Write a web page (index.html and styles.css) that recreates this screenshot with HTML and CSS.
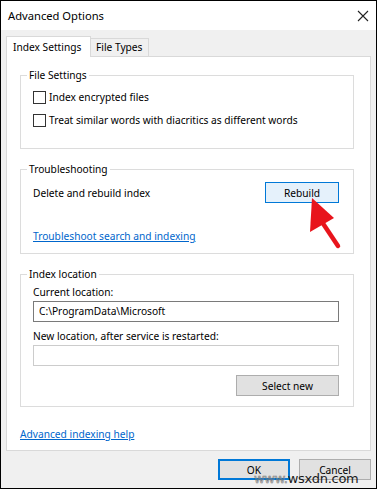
FILE: index.html
```html
<!DOCTYPE html>
<html lang="en">

<head>
    <meta charset="UTF-8">
    <meta name="viewport" content="width=device-width, initial-scale=1.0">
    <title>Advanced Options</title>
    <link rel="stylesheet" href="styles.css">
</head>

<body>
    <!-- 对话框窗口 -->
    <div class="window">
        <!-- 标题栏 -->
        <div class="titlebar">
            <span class="title">Advanced Options</span>
            <svg class="close" width="12" height="12" viewBox="0 0 12 12">
                <path d="M1 1 L11 11 M11 1 L1 11" stroke="#222" stroke-width="1.1" fill="none" />
            </svg>
        </div>

        <div class="content">
            <!-- 选项卡 -->
            <div class="tabs">
                <div class="tab active">Index Settings</div>
                <div class="tab">File Types</div>
            </div>

            <div class="panel">
                <fieldset class="group group-files">
                    <legend>File Settings</legend>
                    <label class="check"><span class="box"></span>Index encrypted files</label>
                    <label class="check"><span class="box"></span>Treat similar words with diacritics as different words</label>
                </fieldset>

                <fieldset class="group group-trouble">
                    <legend>Troubleshooting</legend>
                    <div class="row">
                        <span>Delete and rebuild index</span>
                        <button class="btn btn-focus">Rebuild</button>
                    </div>
                    <a href="#" class="link">Troubleshoot search and indexing</a>
                </fieldset>

                <fieldset class="group group-location">
                    <legend>Index location</legend>
                    <div class="field-label">Current location:</div>
                    <div class="input">C:\ProgramData\Microsoft</div>
                    <div class="field-label second">New location, after service is restarted:</div>
                    <div class="input disabled"></div>
                    <div class="row-end">
                        <button class="btn btn-select">Select new</button>
                    </div>
                </fieldset>

                <a href="#" class="link help">Advanced indexing help</a>
            </div>

            <!-- 底部按钮 -->
            <div class="actions">
                <button class="btn btn-default">OK</button>
                <button class="btn">Cancel</button>
            </div>
        </div>
    </div>

    <!-- 红色箭头 -->
    <svg class="arrow" width="377" height="489" viewBox="0 0 377 489">
        <path d="M322 222 L338 246" stroke="#e8141c" stroke-width="4.5" stroke-linecap="round" fill="none" />
        <polygon points="312,198 310,232 334,218" fill="#e8141c" />
    </svg>

    <!-- 水印 -->
    <div class="watermark"><span class="www">www.</span>wsxdn.com</div>
</body>

</html>
```

FILE: styles.css
```css
* {
    margin: 0;
    padding: 0;
    box-sizing: border-box;
}

body {
    position: relative;
    width: 377px;
    height: 489px;
    font-family: "Noto Sans", "Open Sans", sans-serif;
    font-size: 10.2px;
    line-height: 14px;
    color: #000;
}

.window {
    width: 377px;
    height: 489px;
    border: 1px solid #000;
    background: #f0f0f0;
}

.titlebar {
    height: 29px;
    background: #fff;
    display: flex;
    align-items: center;
    justify-content: space-between;
    padding: 0 7px 0 7px;
}

.titlebar .title {
    font-size: 11.2px;
}

.content {
    padding: 6px 5px 0 5px;
}

.tabs {
    display: flex;
    align-items: flex-end;
    height: 21px;
    margin-bottom: -1px;
}

.tab {
    height: 18px;
    margin-bottom: 1px;
    padding: 0 5px;
    border: 1px solid #d9d9d9;
    border-bottom: none;
    background: #f0f0f0;
    line-height: 17px;
    margin-left: -1px;
    white-space: nowrap;
}

.tab.active {
    height: 21px;
    margin-bottom: 0;
    margin-left: 0;
    width: 85px;
    padding: 0 6px;
    background: #fff;
    line-height: 20px;
    position: relative;
    z-index: 1;
}

.panel {
    height: 395px;
    background: #fff;
    border: 1px solid #d9d9d9;
    padding: 11px 13px 0 13px;
}

.group {
    width: 334px;
    border: 1px solid #dcdcdc;
    padding: 0 14px 0 12px;
}

.group legend {
    margin-left: -6px;
    padding: 0 2px;
    line-height: 14px;
}

.group + .group {
    margin-top: 13px;
}

.group-files {
    padding-bottom: 21px;
}

.check {
    display: flex;
    align-items: center;
    height: 14px;
    margin-top: 8px;
}

.check + .check {
    margin-top: 9px;
}

.check .box {
    width: 13px;
    height: 13px;
    border: 1px solid #333;
    background: #fff;
    margin-right: 3px;
}

.group-trouble {
    padding-bottom: 10px;
}

.row {
    display: flex;
    align-items: center;
    justify-content: space-between;
    margin-top: 6px;
}

.btn {
    height: 21px;
    font-family: inherit;
    font-size: 10.2px;
    color: #000;
    background: #e1e1e1;
    border: 1px solid #adadad;
}

.btn-focus {
    width: 74px;
    background: #e5f1fb;
    border-color: #0078d7;
}

.link {
    display: block;
    width: max-content;
    color: #0066cc;
    text-decoration: underline;
}

.group-trouble .link {
    margin-top: 26px;
}

.group-location {
    padding-bottom: 10px;
}

.field-label {
    margin-top: 4px;
}

.field-label.second {
    margin-top: 7px;
}

.input {
    width: 306px;
    height: 21px;
    margin-top: 2px;
    border: 1px solid #7a7a7a;
    background: #fff;
    padding: 0 5px;
    line-height: 19px;
}

.input.disabled {
    border-color: #cccccc;
}

.row-end {
    display: flex;
    justify-content: flex-end;
    margin-top: 9px;
}

.btn-select {
    width: 103px;
}

.help {
    margin-top: 20px;
    margin-left: 0;
}

.actions {
    display: flex;
    justify-content: flex-end;
    gap: 9px;
    margin-top: 8px;
}

.actions .btn {
    width: 72px;
}

.btn-default {
    border: 2px solid #0078d7;
}

.arrow {
    position: absolute;
    left: 0;
    top: 0;
    pointer-events: none;
}

.watermark {
    position: absolute;
    left: 254px;
    top: 471px;
    font-family: "DejaVu Sans", sans-serif;
    font-size: 13px;
    line-height: 16px;
    color: #1a1a1a;
    letter-spacing: -0.3px;
}

.watermark .www {
    color: transparent;
    -webkit-text-stroke: 0.6px #777;
}
```
